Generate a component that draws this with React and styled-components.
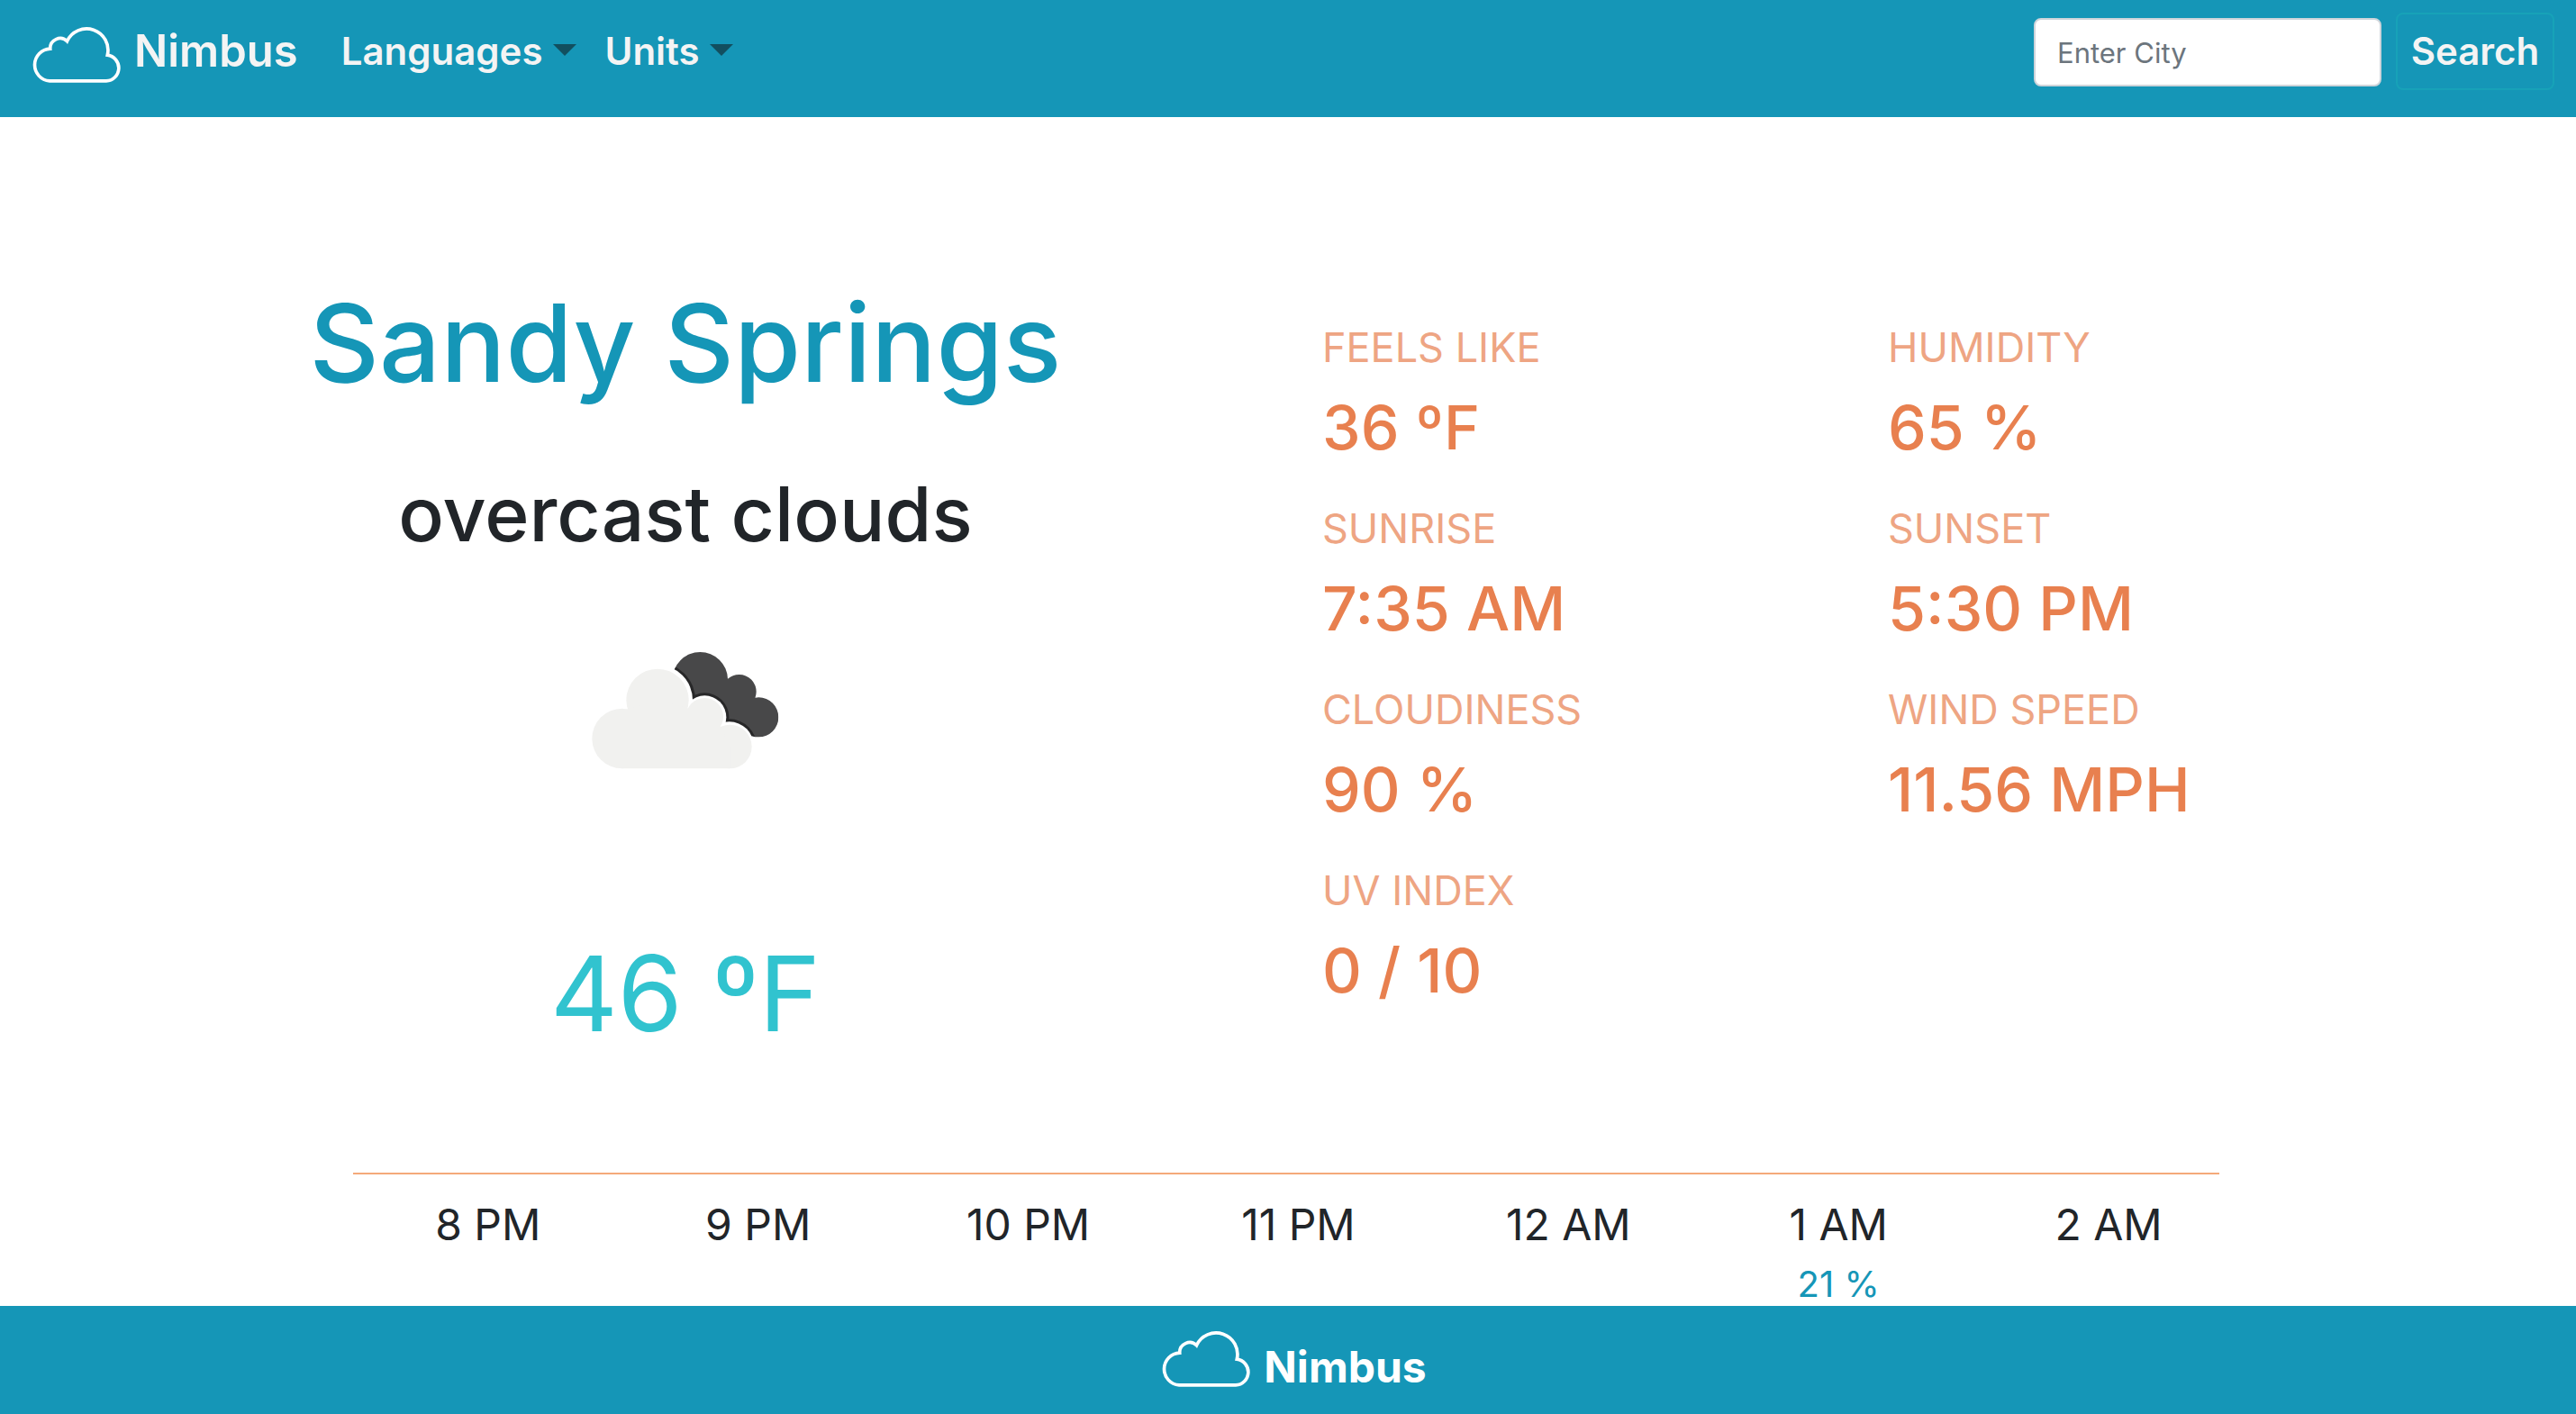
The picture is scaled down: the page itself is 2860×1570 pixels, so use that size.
import React, { useState } from "react";
import styled, { createGlobalStyle } from "styled-components";

const teal = "#1596b7";
const ink = "#212529";
const orange = "#e8804f";
const offWhite = "#f4f4f4";

const GlobalStyle = createGlobalStyle`
  *, *::before, *::after { box-sizing: border-box; }
  body {
    margin: 0;
    background: #fff;
    color: ${ink};
    font-family: Inter, "Liberation Sans", sans-serif;
  }
`;

const Page = styled.div`
  display: flex;
  flex-direction: column;
  min-height: 100vh;
`;

const Header = styled.header`
  display: flex;
  align-items: flex-start;
  justify-content: space-between;
  padding: 14px 24px 30px 36px;
  background: ${teal};
`;

const Nav = styled.nav`
  display: flex;
  align-items: center;
  height: 86px;
`;

const Logo = styled.svg`
  width: 98px;
  height: 62px;
`;

const Brand = styled.a`
  display: flex;
  align-items: center;
  gap: 15px;
  color: ${(p) => (p.$footer ? "#fff" : offWhite)};
  font-size: ${(p) => (p.$footer ? 48 : 49)}px;
  line-height: 60px;
  font-weight: ${(p) => (p.$footer ? 700 : 600)};
  text-decoration: none;

  ${Logo} {
    margin: ${(p) => (p.$footer ? "0 0 18px" : "8px 0 0")};
  }
`;

const MenuList = styled.ul`
  display: flex;
  gap: 32px;
  margin: 0 0 0 48px;
  padding: 0;
  list-style: none;
`;

const MenuButton = styled.button`
  display: flex;
  align-items: center;
  gap: 11px;
  padding: 0;
  border: 0;
  background: none;
  color: ${offWhite};
  font: inherit;
  font-size: 42px;
  line-height: 60px;
  font-weight: 600;
  cursor: pointer;

  &::after {
    content: "";
    margin-bottom: 4px;
    border-top: 13px solid #124f5f;
    border-left: 13px solid transparent;
    border-right: 13px solid transparent;
  }
`;

const SearchForm = styled.form`
  display: flex;
  align-items: center;
  gap: 16px;
`;

const CityInput = styled.input`
  width: 386px;
  height: 76px;
  margin-top: 2px;
  padding: 0 24px;
  border: 2px solid #ced4da;
  border-radius: 8px;
  background: #fff;
  color: ${ink};
  font: inherit;
  font-size: 31px;

  &::placeholder {
    color: #6c757d;
    opacity: 1;
  }
`;

const SearchButton = styled.button`
  width: 176px;
  height: 86px;
  padding: 0 0 2px;
  border: 2px solid #17a2b8;
  border-radius: 8px;
  background: transparent;
  color: ${offWhite};
  font: inherit;
  font-size: 42px;
  font-weight: 600;
  cursor: pointer;
`;

const Main = styled.main`
  flex: 1;
`;

const Current = styled.section`
  display: grid;
  grid-template-columns: 1fr 1fr;
  padding: 179px 92px 0;
`;

const Summary = styled.div`
  display: flex;
  flex-direction: column;
  align-items: center;
`;

const City = styled.h1`
  margin: 0;
  color: ${teal};
  font-size: 120px;
  line-height: 144px;
  font-weight: 500;
`;

const Description = styled.h2`
  margin: 70px 0 0;
  font-size: 84px;
  line-height: 96px;
  font-weight: 500;
`;

const WeatherIcon = styled.svg`
  width: 208px;
  height: 132px;
  margin-top: 104px;
`;

const Temperature = styled.p`
  margin: 176px 0 0;
  color: #31c3cf;
  font-size: 116px;
  line-height: 144px;
`;

const Stats = styled.dl`
  display: grid;
  grid-template-columns: 1fr 1fr;
  align-content: start;
  row-gap: 33px;
  margin: 0;
  padding: 45px 44px 0 38px;
`;

const Stat = styled.div`
  display: flex;
  flex-direction: column;
  gap: 8px;
  color: ${orange};
`;

const StatLabel = styled.dt`
  font-size: 45px;
  line-height: 64px;
  text-transform: uppercase;
  opacity: 0.7;
`;

const StatValue = styled.dd`
  margin: 0;
  font-size: 68px;
  line-height: 96px;
  font-weight: 500;
`;

const Hourly = styled.section`
  padding: 127px 12.9% 0 13.7%;
`;

const Divider = styled.hr`
  height: 2px;
  margin: 0 27px 20px 0;
  border: 0;
  background: #f4a97a;
`;

const Hours = styled.ol`
  display: grid;
  grid-template-columns: repeat(7, 1fr);
  margin: 0;
  padding: 0;
  list-style: none;
`;

const Hour = styled.li`
  display: flex;
  flex-direction: column;
  align-items: center;
  gap: 8px;
  font-size: 48px;
  line-height: 72px;
`;

const Rain = styled.span`
  color: ${teal};
  font-size: 40px;
  line-height: 44px;
`;

const Footer = styled.footer`
  display: flex;
  align-items: center;
  justify-content: center;
  height: 120px;
  padding: 16px 0 0 14px;
  background: ${teal};
`;

function CloudLogo() {
  return (
    <Logo viewBox="93 144 293 185" aria-hidden="true">
      <path
        d="M150 323A53.6 53.6 0 0 1 152 216A33 33 0 0 1 208 191A71.2 71.2 0 0 1 342 237A43.2 43.2 0 0 1 338 323Z"
        fill="none"
        stroke="#fff"
        strokeWidth="11"
      />
    </Logo>
  );
}

function BrokenClouds() {
  return (
    <WeatherIcon viewBox="174 125 624 396" role="img" aria-label="overcast clouds">
      <defs>
        <clipPath id="rear-cloud">
          <circle cx="535" cy="220" r="92" />
          <circle cx="665" cy="260" r="57" />
          <circle cx="730" cy="345" r="66" />
          <path d="M455 180L622 215L715 275L730 405L600 420L470 300Z" />
        </clipPath>
      </defs>
      <g clipPath="url(#rear-cloud)">
        <rect x="400" y="100" width="420" height="340" fill="#484849" />
        <g fill="#272728">
          <circle cx="393" cy="288" r="126" />
          <circle cx="550" cy="345" r="81" />
          <circle cx="632" cy="442" r="91" />
        </g>
      </g>
      <g fill="#fff">
        <circle cx="393" cy="288" r="117" />
        <circle cx="550" cy="345" r="72" />
        <circle cx="632" cy="442" r="82" />
      </g>
      <g fill="#f1f1ef">
        <circle cx="275" cy="416" r="100" />
        <circle cx="393" cy="288" r="104" />
        <circle cx="550" cy="343" r="62" />
        <circle cx="634" cy="443" r="73" />
        <path d="M289 320L393 288L550 330L600 370L634 443L634 516L275 516Z" />
      </g>
    </WeatherIcon>
  );
}

const stats = [
  ["Feels like", "36 ºF"],
  ["Humidity", "65 %"],
  ["Sunrise", "7:35 AM"],
  ["Sunset", "5:30 PM"],
  ["Cloudiness", "90 %"],
  ["Wind speed", "11.56 MPH"],
  ["UV index", "0 / 10"],
];

const hours = [
  { time: "8 PM" },
  { time: "9 PM" },
  { time: "10 PM" },
  { time: "11 PM" },
  { time: "12 AM" },
  { time: "1 AM", rain: "21 %" },
  { time: "2 AM" },
];

export default function App() {
  const [query, setQuery] = useState("");

  return (
    <Page>
      <GlobalStyle />
      <Header>
        <Nav>
          <Brand href="#">
            <CloudLogo />
            Nimbus
          </Brand>
          <MenuList>
            <li>
              <MenuButton type="button" aria-haspopup="menu">Languages</MenuButton>
            </li>
            <li>
              <MenuButton type="button" aria-haspopup="menu">Units</MenuButton>
            </li>
          </MenuList>
        </Nav>
        <SearchForm role="search" onSubmit={(e) => e.preventDefault()}>
          <CityInput
            type="text"
            aria-label="Enter City"
            placeholder="Enter City"
            value={query}
            onChange={(e) => setQuery(e.target.value)}
          />
          <SearchButton type="submit">Search</SearchButton>
        </SearchForm>
      </Header>

      <Main>
        <Current>
          <Summary>
            <City>Sandy Springs</City>
            <Description>overcast clouds</Description>
            <BrokenClouds />
            <Temperature>46 ºF</Temperature>
          </Summary>
          <Stats>
            {stats.map(([label, value]) => (
              <Stat key={label}>
                <StatLabel>{label}</StatLabel>
                <StatValue>{value}</StatValue>
              </Stat>
            ))}
          </Stats>
        </Current>

        <Hourly>
          <Divider />
          <Hours>
            {hours.map(({ time, rain }) => (
              <Hour key={time}>
                {time}
                {rain && <Rain>{rain}</Rain>}
              </Hour>
            ))}
          </Hours>
        </Hourly>
      </Main>

      <Footer>
        <Brand href="#" $footer>
          <CloudLogo />
          Nimbus
        </Brand>
      </Footer>
    </Page>
  );
}
